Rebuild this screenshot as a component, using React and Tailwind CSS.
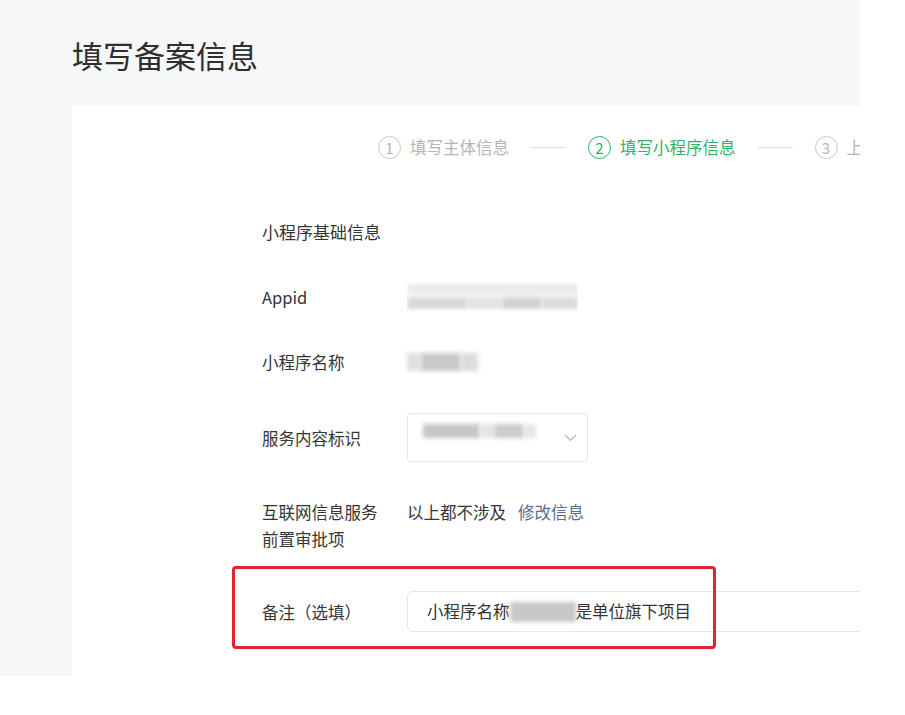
import React from "react";

const font = { fontFamily: '"Noto Sans CJK SC", "Noto Sans", sans-serif' };

function Step({ n, label, active }) {
  return (
    <div className={`flex shrink-0 items-center gap-[9px] ${active ? "text-[#2fb36b]" : "text-[#b5b5b5]"}`}>
      <div
        className={`w-[23px] h-[23px] shrink-0 rounded-full border-[1.5px] flex items-center justify-center text-[15px] leading-none ${
          active ? "border-[#2fb36b]" : "border-[#c8c8c8]"
        }`}
      >
        {n}
      </div>
      <span className="text-[16.5px] leading-[22px] whitespace-nowrap">{label}</span>
    </div>
  );
}

function Blur({ className }) {
  return <div className={`blur-[2px] shrink-0 ${className}`} />;
}

export default function App() {
  return (
    <div className="w-[905px] h-[715px] bg-white text-[#353535]" style={font}>
      <div className="w-[860px] h-[676px] bg-[#f6f7f9] overflow-hidden flex flex-col">
        <div className="h-[106px] shrink-0 pl-[72px] pt-[36px]">
          <h1 className="text-[31px] leading-[38px] text-[#2e2e2e]">填写备案信息</h1>
        </div>

        <div className="ml-[72px] flex-1 bg-white">
          {/* steps */}
          <div className="pt-[30px] pl-[306px] flex items-center gap-[22px] h-[52px]">
            <Step n="1" label="填写主体信息" />
            <div className="w-[35px] h-px shrink-0 bg-[#dcdcdc]" />
            <Step n="2" label="填写小程序信息" active />
            <div className="w-[35px] h-px shrink-0 bg-[#dcdcdc]" />
            <Step n="3" label="上传资料" />
          </div>

          <div className="pl-[190px] flex flex-col text-[16.5px]">
            <div className="mt-[62px] h-[24px] leading-[24px] text-[17px] text-[#333]">小程序基础信息</div>

            <div className="mt-[39px] flex items-center h-[28px]">
              <div className="w-[145px] shrink-0 leading-[24px]">Appid</div>
              <div className="w-[171px] h-[28px] flex flex-col gap-[2px] overflow-hidden">
                <Blur className="h-[12px] w-full bg-[#ececec]" />
                <div className="h-[12px] flex">
                  <Blur className="w-[60px] bg-[#d8d8d8]" />
                  <Blur className="w-[35px] bg-[#e2e2e2]" />
                  <Blur className="w-[40px] bg-[#d2d2d2]" />
                  <Blur className="w-[36px] bg-[#dadada]" />
                </div>
              </div>
            </div>

            <div className="mt-[39px] flex items-center h-[24px]">
              <div className="w-[145px] shrink-0 leading-[24px]">小程序名称</div>
              <div className="w-[71px] h-[18px] flex">
                <Blur className="w-[14px] bg-[#e0e0e0]" />
                <Blur className="w-[40px] bg-[#c9c9c9]" />
                <Blur className="w-[17px] bg-[#dcdcdc]" />
              </div>
            </div>

            <div className="mt-[39px] flex items-center h-[49px]">
              <div className="w-[145px] shrink-0 leading-[24px]">服务内容标识</div>
              <div className="w-[181px] h-[49px] shrink-0 border border-[#e6e6e6] rounded-[4px] flex items-start justify-between pl-[15px] pr-[10px]">
                <div className="mt-[10px] h-[14px] flex">
                  <Blur className="w-[57px] bg-[#c6c6c6]" />
                  <Blur className="w-[14px] bg-[#e4e4e4]" />
                  <Blur className="w-[30px] bg-[#cbcbcb]" />
                  <Blur className="w-[12px] bg-[#e6e6e6]" />
                </div>
                <svg className="mt-[20px]" width="13" height="8" viewBox="0 0 13 8" fill="none">
                  <path d="M1 1l5.5 5.5L12 1" stroke="#b8b8b8" strokeWidth="1.2" />
                </svg>
              </div>
            </div>

            <div className="mt-[37px] flex items-start">
              <div className="w-[145px] shrink-0 leading-[27px]">
                互联网信息服务
                <br />
                前置审批项
              </div>
              <div className="leading-[27px] flex gap-[12px]">
                <span>以上都不涉及</span>
                <span className="text-[#576b95]">修改信息</span>
              </div>
            </div>

            <div className="mt-[38px] relative flex items-center h-[41px]">
              <div className="absolute left-[-30px] top-[-25px] w-[484px] h-[83px] border-[3px] border-[#e0262a] rounded-[4px]" />
              <div className="w-[145px] shrink-0 leading-[24px]">备注（选填）</div>
              <div className="w-[500px] h-[41px] shrink-0 border border-[#e6e6e6] rounded-[6px] flex items-center pl-[19px] text-[#333]">
                <span>小程序名称</span>
                <Blur className="w-[66px] h-[20px] bg-[#c8c8c8]" />
                <span>是单位旗下项目</span>
              </div>
            </div>
          </div>
        </div>
      </div>
    </div>
  );
}
